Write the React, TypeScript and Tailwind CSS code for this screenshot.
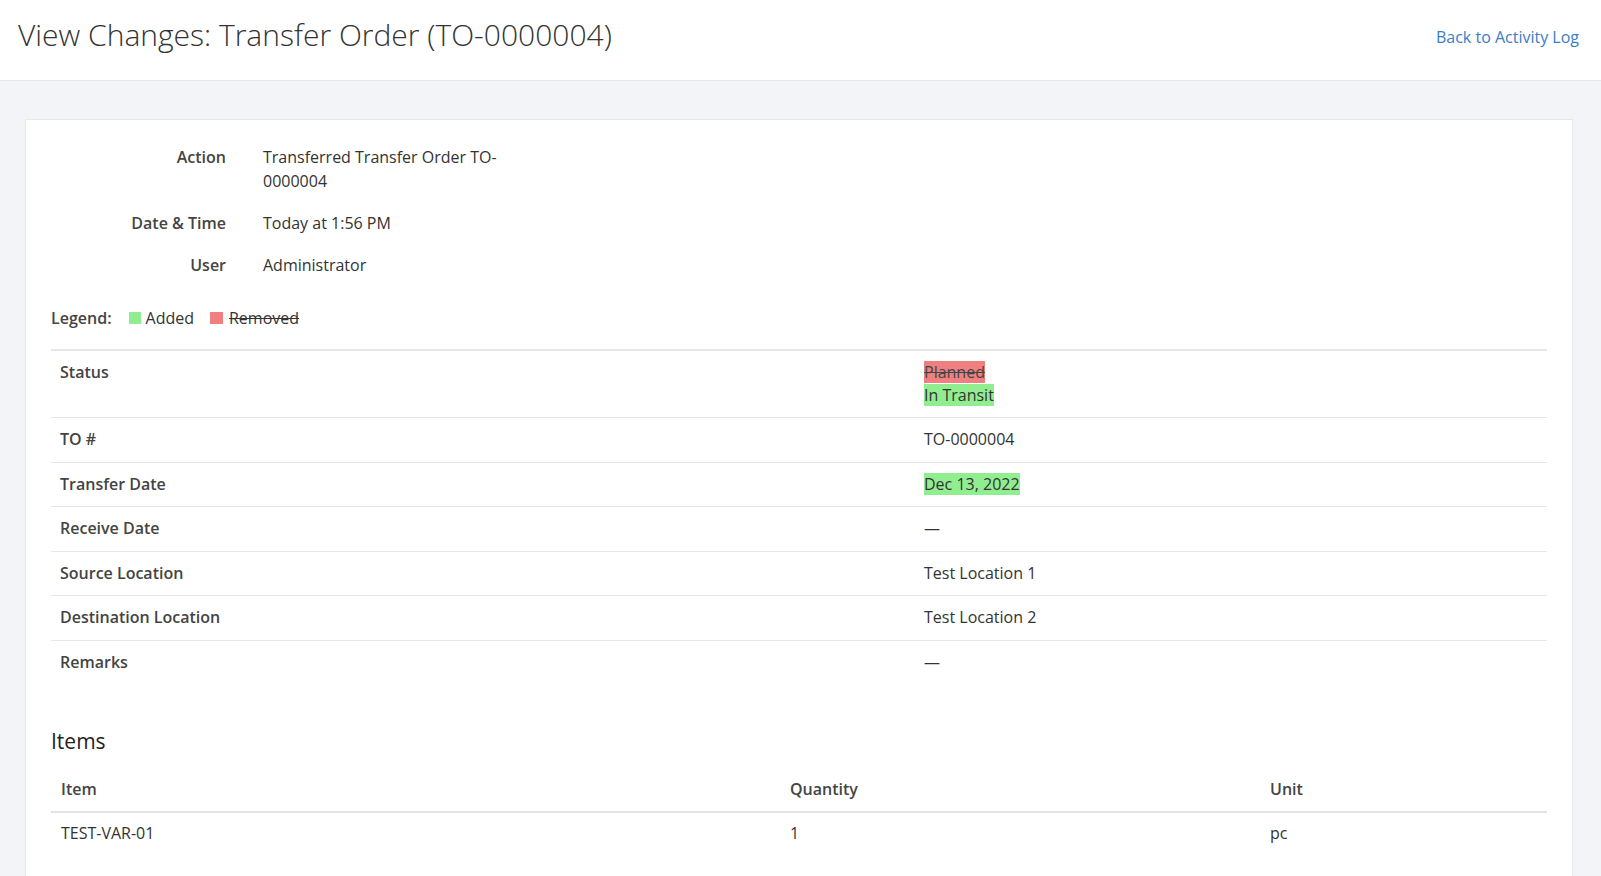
import React from "react"

const details = [
  { label: "Action", value: "Transferred Transfer Order TO-0000004" },
  { label: "Date & Time", value: "Today at 1:56 PM" },
  { label: "User", value: "Administrator" },
]

type Change = { removed?: string; added?: string; value?: string }

const fields: { label: string; change: Change }[] = [
  { label: "Status", change: { removed: "Planned", added: "In Transit" } },
  { label: "TO #", change: { value: "TO-0000004" } },
  { label: "Transfer Date", change: { added: "Dec 13, 2022" } },
  { label: "Receive Date", change: { value: "—" } },
  { label: "Source Location", change: { value: "Test Location 1" } },
  { label: "Destination Location", change: { value: "Test Location 2" } },
  { label: "Remarks", change: { value: "—" } },
]

function ChangeValue({ change }: { change: Change }) {
  return (
    <div>
      {change.removed && (
        <div>
          <del className="bg-[#f08080] text-[#444]">{change.removed}</del>
        </div>
      )}
      {change.added && (
        <div>
          <ins className="bg-[#90ee90] no-underline">{change.added}</ins>
        </div>
      )}
      {change.value && <div>{change.value}</div>}
    </div>
  )
}

export default function App() {
  return (
    <div
      className="min-h-screen bg-[#f3f4f8] text-[#333]"
      style={{ fontFamily: '"Open Sans", "Liberation Sans", sans-serif' }}
    >
      <header className="flex h-[81px] items-start justify-between border-b border-[#e5e7eb] bg-white pl-[18px] pr-[22px]">
        <h1 className="pt-[17px] text-[30px] font-light leading-9 text-[#333]">
          View Changes: Transfer Order (TO-0000004)
        </h1>
        <a href="#" className="pt-[25px] text-base leading-6 text-[#3b7cc6]">
          Back to Activity Log
        </a>
      </header>

      <main className="pl-[25px] pr-[28px] pt-[38px]">
        <div className="border border-[#e5e7eb] bg-white px-[25px] pt-[25px] pb-10 text-base">
          <dl className="flex flex-col gap-[18px]">
            {details.map((d) => (
              <div key={d.label} className="flex leading-6">
                <dt className="w-[175px] text-right font-semibold text-[#444]">
                  {d.label}
                </dt>
                <dd className="ml-[37px] w-[250px]">{d.value}</dd>
              </div>
            ))}
          </dl>

          <div className="mt-[29px] flex items-center leading-6">
            <span className="font-semibold text-[#444]">Legend:</span>
            <span className="ml-[17px] h-3 w-3 bg-[#90ee90]" />
            <span className="ml-[5px]">Added</span>
            <span className="ml-4 h-3 w-[13px] bg-[#f08080]" />
            <span className="ml-[6px] line-through">Removed</span>
          </div>

          <table className="mt-[19px] w-full border-collapse border-t-2 border-[#e5e7eb] leading-[23.5px]">
            <tbody>
              {fields.map((f, i) => (
                <tr
                  key={f.label}
                  className={i < fields.length - 1 ? "border-b border-[#e6e6e6]" : ""}
                >
                  <td className="w-[864px] py-[10px] pl-[9px] align-top font-semibold text-[#444]">
                    {f.label}
                  </td>
                  <td
                    className={
                      i === 0
                        ? "py-[10px] pl-[9px] align-top leading-[23px]"
                        : "py-[10px] pl-[9px] align-top"
                    }
                  >
                    <ChangeValue change={f.change} />
                  </td>
                </tr>
              ))}
            </tbody>
          </table>

          <h2 className="mt-[43px] text-[21px] font-medium leading-7 text-[#222]">
            Items
          </h2>
          <table className="mt-[13px] w-full border-collapse leading-[23.5px]">
            <thead>
              <tr className="border-b-2 border-[#e3e3e3] text-left">
                <th className="w-[729px] pt-[10px] pb-[9px] pl-[10px] font-semibold text-[#444]">
                  Item
                </th>
                <th className="w-[480px] pt-[10px] pb-[9px] pl-[10px] font-semibold text-[#444]">
                  Quantity
                </th>
                <th className="pt-[10px] pb-[9px] pl-[10px] font-semibold text-[#444]">
                  Unit
                </th>
              </tr>
            </thead>
            <tbody>
              <tr>
                <td className="pt-[9px] pb-[10px] pl-[10px]">TEST-VAR-01</td>
                <td className="pt-[9px] pb-[10px] pl-[10px]">1</td>
                <td className="pt-[9px] pb-[10px] pl-[10px]">pc</td>
              </tr>
            </tbody>
          </table>
        </div>
      </main>
    </div>
  )
}
